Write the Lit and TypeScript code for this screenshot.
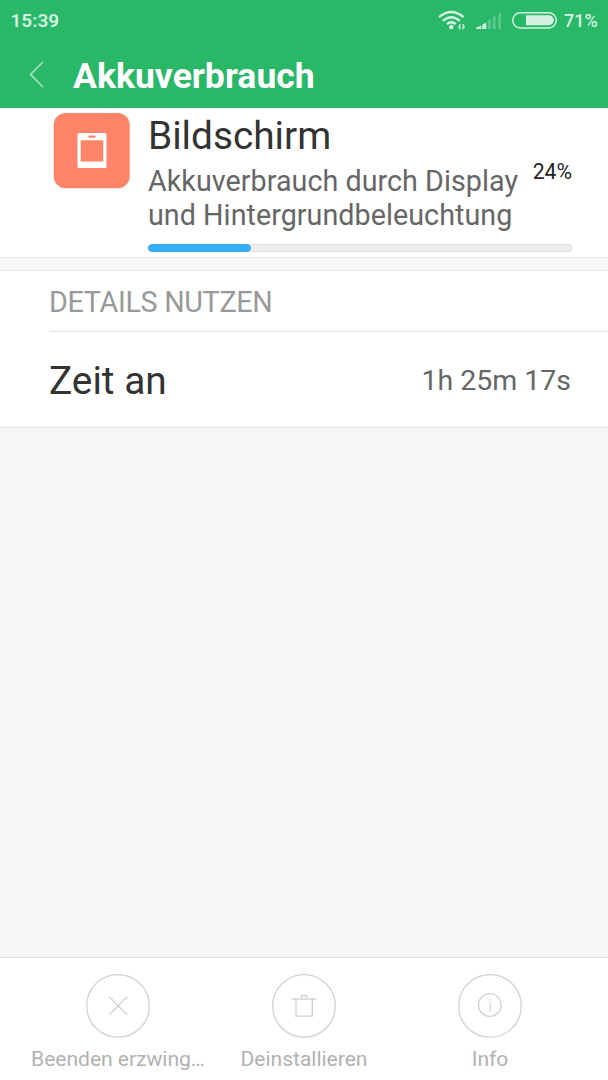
import { LitElement, html, css, svg } from "lit";
import { customElement } from "lit/decorators.js";

@customElement("status-bar")
class StatusBar extends LitElement {
  static styles = css`
    :host { display: flex; height: 42px; align-items: center; padding: 0 11px 0 10.5px; color: #d4f1e1;
      font-size: 19px; font-weight: 600; box-sizing: border-box; }
    .time { flex: 1; line-height: 41px; height: 42px; }
    .level { line-height: 42px; height: 42px; width: 33px; margin-left: 6px; font-size: 18px; font-weight: 500; white-space: nowrap; }
    svg { display: block; }
  `;
  render() {
    return html`
      <span class="time">15:39</span>
      <svg width="120" height="42" viewBox="438 0 120 42">
        <g fill="none" stroke="#d4f1e1" stroke-width="2.4">
          <path d="M439 17.200Q451.300 6.800 463.600 17.200" />
          <path d="M442.800 20.900Q451.300 13.700 459.800 20.900" />
          <path d="M446.800 24.200Q451.300 20.200 455.800 24.200" />
        </g>
        <circle cx="451.300" cy="27" r="2.300" fill="#d4f1e1" />
        <path d="M459.800 24v5.500M463.200 24v5.500M458 26.800h2M463 26.800h2" stroke="#b5e5ca" stroke-width="1.600" fill="none" />
        <path d="M476.200 29v-1.200l5-2.200V29zM482.300 29v-4.200l4-2.200V29z" fill="#d4f1e1" />
        <path d="M488 29v-8.500l2.800-2V29zM492.800 29V17l2.800-2v14zM498.200 29V14.500l2.800-2.500v17z" fill="#5bc98d" />
        <rect x="512.700" y="12.700" width="43.600" height="15.200" rx="7.600" fill="none" stroke="#d4f1e1" stroke-width="1.500" />
        <path d="M526 15.300h22.800a5 5 0 0 1 0 10H526z" fill="#d4f1e1" />
      </svg>
      <span class="level">71%</span>
    `;
  }
}

@customElement("title-bar")
class TitleBar extends LitElement {
  static styles = css`
    :host { display: flex; height: 66px; padding-left: 29px; box-sizing: border-box; align-items: center; }
    svg { display: block; margin-right: 28px; }
    .title { color: #fff; font-size: 35.6px; font-weight: 700; line-height: 68px; height: 66px; }
  `;
  render() {
    return html`
      <svg width="16" height="66" viewBox="29 42 16 66">
        <path d="M43 62L30.500 74.400L43 87" fill="none" stroke="#a3dfbf" stroke-width="1.700" />
      </svg>
      <span class="title">Akkuverbrauch</span>
    `;
  }
}

@customElement("usage-summary")
class UsageSummary extends LitElement {
  static styles = css`
    :host { display: flex; height: 150px; box-sizing: border-box; background: #fff; border-bottom: 1px solid #e4e4e4;
      padding: 5px 36px 0 53px; }
    .icon { display: block; flex: none; margin-right: 18px; }
    .body { flex: 1; display: flex; flex-direction: column; }
    .name { font-size: 38.8px; line-height: 46px; height: 51px; color: #333; }
    .row { display: flex; justify-content: space-between; height: 72px; white-space: nowrap; }
    .text { font-size: 28.7px; letter-spacing: 0.04px; line-height: 34px; color: #666; }
    .percent { font-size: 21.2px; line-height: 16px; color: #222; }
    .track { height: 8px; border-radius: 4px; background: #ededed; border: 1px solid #dcdcdc; box-sizing: border-box;
      display: flex; margin-top: 8px; }
    .fill { background: #33b1fd; border-radius: 4px; margin: -1px; border: 1px solid #39a7e8; box-sizing: border-box; }
  `;
  percent = 24;
  render() {
    return html`
      <svg class="icon" width="77" height="77" viewBox="53 113 77 77">
        <rect x="53.700" y="113" width="76" height="75.300" rx="12" fill="#fb8469" />
        <path fill-rule="evenodd" fill="#fff" d="M79 133h26a1.500 1.500 0 0 1 1.500 1.500v32a1.500 1.500 0 0 1-1.500 1.500H79a1.500 1.500 0 0 1-1.500-1.500v-32A1.500 1.500 0 0 1 79 133zM80.700 140.300V161.500H103.300V140.300z" />
        <rect x="88.300" y="135.500" width="7.400" height="2.200" rx="1" fill="#fb8469" />
      </svg>
      <div class="body">
        <div class="name">Bildschirm</div>
        <div class="row">
          <div class="text">Akkuverbrauch durch Display<br />und Hintergrundbeleuchtung</div>
          <div class="percent">${this.percent}%</div>
        </div>
        <div class="track"><div class="fill" style="width:${this.percent + 0.5}%"></div></div>
      </div>
    `;
  }
}

@customElement("usage-details")
class UsageDetails extends LitElement {
  static styles = css`
    :host { display: block; margin-top: 12px; height: 158px; box-sizing: border-box; background: #fff;
      border-top: 1px solid #e4e4e4; border-bottom: 1px solid #e4e4e4; padding-left: 49px; }
    .heading { height: 61px; box-sizing: border-box; border-bottom: 1px solid #e0e0e0; font-size: 28.7px;
      letter-spacing: -0.3px; line-height: 62px; color: #999; }
    .entry { display: flex; justify-content: space-between; padding-right: 37px; height: 95px; }
    .label { font-size: 38.8px; line-height: 98px; color: #333; }
    .value { font-size: 28.5px; line-height: 98px; color: #666; }
  `;
  render() {
    return html`
      <div class="heading">DETAILS NUTZEN</div>
      <div class="entry"><span class="label">Zeit an</span><span class="value">1h 25m 17s</span></div>
    `;
  }
}

const actions = [
  { label: "Beenden erzwing…", glyph: svg`<path d="M23.200 22.700L41.200 40.700M41.200 22.700L23.200 40.700" />` },
  { label: "Deinstallieren", glyph: svg`<path d="M19.800 25H44.200M29.500 24.500V21.500H34.700V24.500M24 25.500V42.200H40.300V25.500" />` },
  { label: "Info", glyph: svg`<circle cx="31.800" cy="31" r="11.300" /><path d="M32 24.700v1.800M32 28.500v9.300" />` },
];

@customElement("action-bar")
class ActionBar extends LitElement {
  static styles = css`
    :host { display: grid; grid-template-columns: repeat(3, 186px); justify-content: center; height: 123px;
      box-sizing: border-box; background: #fff; border-top: 1px solid #e0e0e0; padding-top: 16px; }
    .action { display: flex; flex-direction: column; align-items: center; color: #b2b2b2; }
    svg { display: block; fill: none; stroke: #d2d2d2; stroke-width: 1.3; }
    .label { font-size: 21.1px; letter-spacing: -0.04px; line-height: 26px; margin-top: 8px; white-space: nowrap; }
  `;
  render() {
    return html`${actions.map((a) => html`
      <div class="action">
        <svg width="64" height="64" viewBox="0 0 64 64"><circle cx="32" cy="31.900" r="31.300" />${a.glyph}</svg>
        <span class="label">${a.label}</span>
      </div>`)}`;
  }
}

@customElement("app-root")
class AppRoot extends LitElement {
  static styles = css`
    :host { display: flex; flex-direction: column; height: 1080px; background: #f7f7f7; overflow: hidden;
      font-family: Roboto, sans-serif; }
    header { background: #28b868; }
    main { flex: 1; }
  `;
  render() {
    return html`
      <header><status-bar></status-bar><title-bar></title-bar></header>
      <main><usage-summary></usage-summary><usage-details></usage-details></main>
      <action-bar></action-bar>
    `;
  }
}
